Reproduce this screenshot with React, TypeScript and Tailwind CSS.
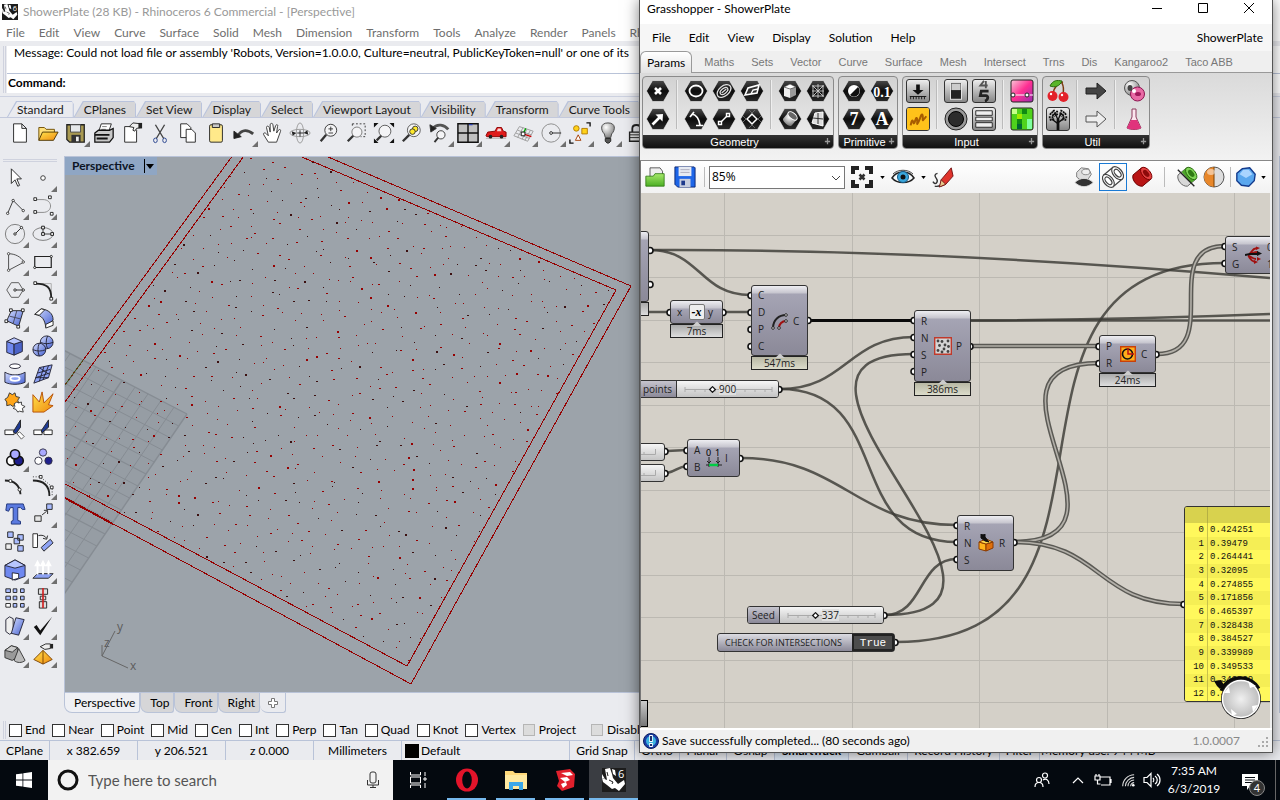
import { useState } from "react";
import type { ReactNode } from "react";

const ICONS: Record<string, ReactNode> = {
  // standard toolbar
  newFile: <path d="M5 2h9l5 5v15H5zM14 2v5h5" fill="#fff" stroke="#222" />,
  open: (
    <>
      <path d="M2 20V6h6l2 2h9v4" fill="#ffe07a" stroke="#6b4a00" />
      <path d="M2 20l4-9h17l-5 9z" fill="url(#gold)" stroke="#4a3300" />
    </>
  ),
  save: (
    <>
      <path d="M2 3h19v19H5l-3-3z" fill="#a99a52" stroke="#222" strokeWidth="1.4" />
      <path d="M6 3h11v8H6z" fill="#e6e8ea" stroke="#444" />
      <path d="M7 14h10v8H7z" fill="#333" />
      <path d="M12 16h3v5h-3z" fill="#eee" />
    </>
  ),
  print: (
    <>
      <path d="M6 11l3-9h11l-3 9z" fill="#fff" stroke="#222" />
      <path d="M10 5h5M9 8h5" stroke="#777" />
      <path d="M2 12l4-3h12l4-2v10l-4 5H2z" fill="#c8c8c8" stroke="#111" strokeWidth="1.4" />
      <path d="M2 14h16M4 18h12" stroke="#111" strokeWidth="2" />
    </>
  ),
  props: (
    <>
      <path d="M4 5h9l4 4v13H4z" fill="#fff" stroke="#222" />
      <path d="M9 5l4-4 9 1v4l-5 1-2 3-2-1 1-3z" fill="#eee" stroke="#222" />
      <path d="M19 1h4v6h-4z" fill="#222" />
    </>
  ),
  cut: (
    <g fill="none" stroke="#444">
      <path d="M7 3l9 15M17 3L8 18" strokeWidth="1.5" />
      <ellipse cx="7" cy="20" rx="2" ry="2.5" stroke="#24408c" />
      <ellipse cx="17" cy="20" rx="2" ry="2.5" stroke="#24408c" />
    </g>
  ),
  copy: (
    <g fill="#fff" stroke="#222">
      <path d="M4 2h7l4 4v11H4z" />
      <path d="M10 8h6l4 4v10H10z" />
    </g>
  ),
  paste: (
    <>
      <rect x="5" y="3" width="14" height="19" rx="1.5" fill="#ffe98a" stroke="#222" />
      <path d="M8 2h8v4H8z" fill="#c9c9c9" stroke="#222" />
    </>
  ),
  undo: (
    <>
      <path d="M6 14C10 8 16 8 22 13" fill="none" stroke="#444" strokeWidth="3" />
      <path d="M1 10l8 6-8 2z" fill="#222" stroke="#222" />
    </>
  ),
  hand: <path d="M8 22l-5-8c-1-2 1-3 3-1l2 2-2-9c0-2 2-2 3 0l1 5V3c0-2 3-2 3 0l1 7 2-6c1-2 3-1 2 1l-1 7 2-3c2-2 3 0 2 2l-4 11z" fill="#fff" stroke="#333" />,
  orbit: (
    <g fill="none" stroke="#999">
      <ellipse cx="12" cy="12" rx="11" ry="4" />
      <ellipse cx="12" cy="12" rx="4" ry="11" />
      <path d="M12 9v7M9 12h7" stroke="#222" />
      <path d="M3 10l5 2-4 3zM20 9l-4 3 5 2z" stroke="none" fill="#222" />
    </g>
  ),
  zoomInOut: (
    <g fill="none" stroke="#333">
      <circle cx="15" cy="9" r="6.5" fill="#f4f4f6" />
      <path d="M10 14l-6 7" strokeWidth="2.5" />
      <path d="M15 5v5M12.500 7.500h5M12.500 12h5" />
    </g>
  ),
  zoomWin: (
    <g fill="none" stroke="#333">
      <path d="M8 2h14v14h-5M8 2v4" strokeDasharray="2 2" />
      <circle cx="13" cy="11" r="5.500" stroke="#777" fill="#f4f4f6" />
      <path d="M9 15l-6 6" strokeWidth="2.500" />
    </g>
  ),
  zoomExt: (
    <g fill="none" stroke="#333">
      <circle cx="13" cy="10" r="6.500" fill="#f4f4f6" stroke="#555" />
      <path d="M9 15l-5 5" strokeWidth="2.500" />
      <path d="M1 6V1h5zM23 6V1h-5zM23 18v5h-5zM1 18v5h5z" fill="#111" stroke="none" />
    </g>
  ),
  zoomSel: (
    <g stroke="#333">
      <circle cx="14" cy="9" r="7" fill="#f4f4f6" stroke="#555" />
      <circle cx="15.500" cy="7.500" r="3" fill="#ffe92b" />
      <circle cx="12.500" cy="10.500" r="3" fill="#ffe92b" />
      <path d="M9 14l-7 7" strokeWidth="2.500" />
    </g>
  ),
  undoView: (
    <g fill="none" stroke="#333">
      <path d="M4 7c5-6 13-4 17 1" strokeWidth="3" stroke="#555" />
      <path d="M1 3l1 8 6-4z" fill="#222" />
      <circle cx="13" cy="14" r="4.500" fill="#f4f4f6" />
      <path d="M10 17l-4 5" strokeWidth="2" />
    </g>
  ),
  fourView: (
    <>
      <path d="M1 2h22v20H1z" fill="#c0c0c0" stroke="#111" strokeWidth="1.600" />
      <path d="M12 2v20M1 12h22" stroke="#111" strokeWidth="1.600" />
      <path d="M13 3h4" stroke="#1530d0" />
    </>
  ),
  car: (
    <>
      <path d="M1 18h22" stroke="#bbb" />
      <path d="M1 15l2-4 8-1 2-4h5l2 4 3 1v5H2z" fill="#e01b1b" stroke="#8c0000" />
      <path d="M14 7h3l1 3h-5z" fill="#f7d5d5" />
      <circle cx="6" cy="16" r="2" fill="#222" />
      <circle cx="18" cy="16" r="2" fill="#222" />
    </>
  ),
  cplane: (
    <g fill="none" stroke="#9a9a9a">
      <path d="M7 5l15 5-6 11L1 15zM5 9l15 5M3 12l15 6M11 6L5 17M15 8l-5 11M19 9l-6 11" />
      <path d="M11 13l9 3" stroke="#c00" strokeWidth="1.500" />
      <path d="M11 13l3-6" stroke="#0a0" strokeWidth="1.500" />
      <path d="M9 11h4v4H9z" fill="#fff" stroke="#111" />
    </g>
  ),
  circleTool: (
    <g fill="none" stroke="#888">
      <circle cx="11" cy="12" r="10" />
      <path d="M11 12h11" stroke="#222" />
      <circle cx="11" cy="12" r="1.500" fill="#fff" stroke="#222" />
    </g>
  ),
  objSnap: (
    <>
      <path d="M1 19v4h4M19 1h4v4" fill="none" stroke="#111" strokeWidth="1.500" />
      <circle cx="8" cy="7" r="3" fill="#ffd21a" stroke="#b07a00" />
      <path d="M14 7h6v6h-6z" fill="#ffd21a" stroke="#b07a00" />
      <path d="M10 14l3 6H7z" fill="#fff" stroke="#a33a00" />
    </>
  ),
  bulb: (
    <>
      <path d="M12 1c-9 0-8 8-4 12l1 4h6l1-4c4-4 5-12-4-12z" fill="url(#ball)" stroke="#444" />
      <path d="M9 18h6v3l-2 2h-2l-2-2z" fill="#555" stroke="#222" />
    </>
  ),
  lock: (
    <>
      <path d="M8 11V7c0-5 9-5 9 0v4" fill="none" stroke="#222" strokeWidth="2" />
      <path d="M5 11h15v10H5z" fill="#ddd" stroke="#222" strokeWidth="1.500" />
      <path d="M5 14h15M5 17h15" stroke="#222" />
    </>
  ),
  // side toolbar
  pointer: <path d="M8 2v16l4-4 3 7 2-1-3-7h5z" fill="#fff" stroke="#222" />,
  dot: <circle cx="12" cy="12" r="2.500" fill="#fff" stroke="#333" />,
  polyline: (
    <g fill="#fff" stroke="#333">
      <path d="M4 20L10 6l11 11" fill="none" />
      <circle cx="4" cy="20" r="1.300" />
      <circle cx="10" cy="6" r="1.300" />
      <circle cx="21" cy="17" r="1.300" />
    </g>
  ),
  curve: (
    <g fill="#fff" stroke="#222">
      <path d="M4 5h8c11 0 11 14 0 14H4" fill="none" stroke="#888" />
      <path d="M2 3h3v3H2zM18 1h3v3h-3zM2 17h3v3H2zM20 19h3v3h-3z" />
    </g>
  ),
  circle: (
    <g fill="none" stroke="#777">
      <circle cx="12" cy="12" r="10.500" />
      <path d="M12 12l7-7" stroke="#222" />
      <circle cx="12" cy="12" r="1.300" stroke="#222" fill="#fff" />
      <circle cx="19" cy="5" r="1.300" stroke="#222" fill="#fff" />
    </g>
  ),
  ellipse: (
    <g fill="none" stroke="#777">
      <ellipse cx="12" cy="12" rx="11" ry="7" />
      <path d="M12 5v7h10" stroke="#333" />
      <path d="M10.500 3.500h3v3h-3zM10.500 10.500h3v3h-3zM20.500 10.500h3v3h-3z" stroke="#111" fill="#fff" />
    </g>
  ),
  arc: (
    <g fill="#fff" stroke="#444">
      <path d="M5 3v18l17-9C18 6 12 3 5 3z" fill="none" />
      <circle cx="5" cy="3" r="1.300" />
      <circle cx="5" cy="21" r="1.300" />
      <circle cx="21" cy="12" r="1.300" />
    </g>
  ),
  rect: (
    <g fill="#fff" stroke="#222">
      <path d="M3 6h18v12H3z" fill="none" strokeWidth="1.300" />
      <circle cx="21" cy="6" r="1.200" />
      <circle cx="3" cy="18" r="1.200" />
    </g>
  ),
  polygon: (
    <g fill="none" stroke="#555">
      <path d="M3 12l5-8h8l5 8-5 8H8z" />
      <path d="M12 12h9" stroke="#222" />
      <circle cx="12" cy="12" r="1.300" stroke="#222" fill="#fff" />
      <circle cx="21" cy="12" r="1.300" stroke="#222" fill="#fff" />
    </g>
  ),
  fillet: (
    <g fill="none" stroke="#222">
      <path d="M4 5h17v16" stroke="#aaa" />
      <path d="M4 5c12 0 17 4 17 16" strokeWidth="2" />
      <path d="M2 3h3v3H2zM19.500 20h3v3h-3z" fill="#fff" />
    </g>
  ),
  surface: (
    <g stroke="#222">
      <path d="M8 4h13l-5 17-13-6z" fill="url(#blue)" />
      <path d="M14 4l-4 14M6 10l12 3" stroke="#445" fill="none" />
      <path d="M6 2h3v3H6zM19 2h3v3h-3zM1 14h3v3H1zM14 20h3v3h-3z" fill="#fff" />
    </g>
  ),
  sweep: (
    <g stroke="#222">
      <path d="M3 8l7-6c8 1 13 5 13 12l-8 8c-1-8-4-13-12-14z" fill="url(#blue)" />
      <path d="M3 8l7-6 4 1-6 6zM23 15v5l-8 3v-4z" fill="#fff" />
    </g>
  ),
  box: (
    <g stroke="#223">
      <path d="M3 7l8 3v12l-8-3z" fill="#6f88f0" />
      <path d="M11 10l9-3v11l-9 4z" fill="#4c64c9" />
      <path d="M3 7l8-4 9 4-9 3z" fill="#b7c5ff" />
    </g>
  ),
  spheres: (
    <g stroke="#223">
      <circle cx="16" cy="8" r="7" fill="url(#blue)" />
      <circle cx="8" cy="16" r="7" fill="url(#blue)" />
      <path d="M17 1c-2 4-2 10 0 14M9 8c5 2 9 2 14 0M8 9c-2 4-2 10 0 14M1 16c5 2 9 2 14 0" fill="none" />
    </g>
  ),
  revolve: (
    <g stroke="#223">
      <ellipse cx="12" cy="3.500" rx="6" ry="2.500" fill="#fff" />
      <path d="M1 10c6 4 16 4 22 0v11c-6 3-16 3-22 0z" fill="url(#blue)" />
      <ellipse cx="12" cy="17" rx="5" ry="2.500" fill="#8ea3f5" stroke="#fff" strokeWidth="2" />
    </g>
  ),
  mesh: (
    <g stroke="#223" fill="none">
      <path d="M8 5l14-3-4 14-16 6z" fill="#8ea3f5" />
      <path d="M13 4L8 20M18 3l-6 15M6 11l14-4M4 16l15-5M8 5l10 7M4 16l14 0" />
    </g>
  ),
  gears: (
    <>
      <path d="M6 2l3 2 3-2 1 4 4 1-2 3 1 3-4 1-2 3-3-2-4 1V12L1 9l3-2z" fill="#ffa61a" stroke="#333" />
      <path d="M14 12l2 1 3-1v3l4 2-3 2 1 4-4-1-2 1-2-3-3-1 2-2-1-3z" fill="#fff" stroke="#333" />
    </>
  ),
  burst: <path d="M1 23L1 4l7 8 3-11 2 12 10-10-5 12 5 1-10 7z" fill="url(#gold)" stroke="#b54b00" />,
  trim: (
    <g stroke="#222">
      <path d="M1 12h10v5H1z" fill="#fff" />
      <path d="M10 14l8-13v8l-5 7z" fill="#1f3a93" />
      <path d="M14 16l3-2 5 5-3 3z" fill="#fff" stroke="#555" />
    </g>
  ),
  split: (
    <g stroke="#222">
      <path d="M2 12h9v5H2zM13 12h9v5h-9z" fill="#fff" />
      <path d="M11 15l-1-2 8-12v8z" fill="#1f3a93" />
    </g>
  ),
  group: (
    <g stroke="#111" strokeWidth="1.800">
      <circle cx="8" cy="15" r="5" fill="#fff" />
      <circle cx="16" cy="15" r="5" fill="#1f1f8c" />
      <circle cx="12" cy="8" r="5" fill="#a9a9ff" />
    </g>
  ),
  ungroup: (
    <g stroke="#334">
      <circle cx="12" cy="6" r="4" fill="#a9a9ff" />
      <circle cx="7" cy="15" r="4" fill="#fff" />
      <circle cx="18" cy="15" r="4" fill="#1f1f8c" />
    </g>
  ),
  join: (
    <g fill="#fff" stroke="#222">
      <path d="M1 6c10 0 16 4 17 15" fill="none" strokeWidth="2" />
      <circle cx="7" cy="6.500" r="1.700" />
      <circle cx="17" cy="16" r="1.700" />
    </g>
  ),
  points: (
    <g fill="#fff" stroke="#222">
      <path d="M1 6c12 0 18 6 18 17" fill="none" strokeWidth="2" />
      <path d="M1 2h8l13 11v9" fill="none" strokeDasharray="1 2" />
      <path d="M8 .500h3v3H8zM20 12h3v3h-3z" />
    </g>
  ),
  text: <path d="M3 1h18l2 6h-3l-2-2h-3v14l3 1v3H8v-3l2-1V5H7L5 9 2 8z" fill="#5b7ae0" stroke="#1d3278" />,
  move: (
    <g stroke="#222">
      <path d="M16 1h6v6h-6z" fill="#a9bcff" />
      <path d="M3 14h7v6H3z" fill="#e5e5e5" />
      <path d="M11 13l5-4M13 8h4v4" fill="none" />
    </g>
  ),
  copies: (
    <g stroke="#222">
      <path d="M4 1h6v6H4zM15 4h6v6h-6zM11 8h6v6h-6zM15 16h6v6h-6z" fill="#a9bcff" />
      <path d="M2 14h6v6H2z" fill="#eee" />
    </g>
  ),
  rotate: (
    <g stroke="#222">
      <path d="M1 3h5v15H1z" fill="#fff" />
      <path d="M10 18l10-9 3 4-10 9z" fill="#8ea3f5" />
      <path d="M7 5c4-1 7 0 9 3M12 8l4 1 1-4" fill="none" />
    </g>
  ),
  solid: (
    <g stroke="#223">
      <path d="M1 7l11-6 11 6v12l-11 4-11-4z" fill="#6f88f0" />
      <path d="M1 7l11 3 11-3-11-6z" fill="#b7c5ff" />
      <path d="M9 15l7 1v5l-7 2z" fill="#fff" />
    </g>
  ),
  extrude: (
    <g stroke="#222">
      <path d="M1 21l5-5h17l-5 5z" fill="#8ea3f5" />
      <path d="M6 17V6M12 17V6M18 17V6M4 7l2-4 2 4zM10 7l2-4 2 4zM16 7l2-4 2 4z" stroke="#fff" strokeWidth="2" fill="#fff" />
    </g>
  ),
  array: (
    <g fill="#a9bcff" stroke="#222">
      <path d="M2 2h5v4H2zM10 2h4v4h-4zM18 2h4v4h-4zM2 10h5v4H2zM10 10h4v4h-4zM18 10h4v4h-4zM10 18h4v4h-4zM18 18h4v4h-4z" />
      <path d="M2 18h5v4H2z" fill="#fff" />
    </g>
  ),
  align: (
    <g fill="#ddd" stroke="#222">
      <path d="M7 2h10v6H7zM9 10h6v4H9zM8 16h8v7H8z" />
      <path d="M12 1v22" stroke="#d02020" strokeWidth="1.800" />
    </g>
  ),
  flow: (
    <g stroke="#223">
      <path d="M2 5l4-3 4 2v15l-4 2-4-3z" fill="#eee" />
      <path d="M8 20L13 3l9 2-6 17z" fill="url(#blue)" />
    </g>
  ),
  check: <path d="M2 13l3-2 4 6L22 2 9 22z" fill="#111" />,
  solids: (
    <g stroke="#333">
      <path d="M1 8l7-5 7 2v10l-6 4-8-3z" fill="#9a9a9a" />
      <path d="M1 8l8 2 6-5-7-2z" fill="#ccc" />
      <path d="M16 6l7 13c-3 3-9 3-12 0z" fill="#bbb" />
    </g>
  ),
  pyramid: (
    <>
      <path d="M12 8l10 10-10 5-10-5z" fill="url(#gold)" stroke="#7a3f00" />
      <path d="M12 8v15" stroke="#7a3f00" />
      <path d="M9 4l6-3h5v5l-6 1z" fill="#eee" stroke="#222" />
      <path d="M20 1h3v5h-3z" fill="#222" />
    </>
  ),
  // component symbols drawn on the hexagons
  hexX: <path d="M9 9l6 6M15 9l-6 6" stroke="#fff" strokeWidth="2.600" />,
  hexArrow: (
    <>
      <path d="M6.500 17.500l7-7" stroke="#fff" strokeWidth="2.600" />
      <path d="M9.500 7.500L17 7l-.5 7.500z" fill="#fff" />
    </>
  ),
  hexCircle: <ellipse cx="12" cy="12" rx="6.500" ry="5.500" fill="none" stroke="#fff" strokeWidth="1.800" />,
  hexArc: <path d="M8 7c5 1 7 5 8 11M6 10l4-5M12 18.500h7" fill="none" stroke="#fff" strokeWidth="1.700" />,
  hexOrbit: (
    <g fill="none" stroke="#ddd" strokeWidth="1.300" transform="rotate(-40 12 12)">
      <ellipse cx="12" cy="12" rx="8" ry="5" />
      <ellipse cx="12" cy="12" rx="4.500" ry="2.500" />
      <path d="M9 12h6" />
    </g>
  ),
  hexLine: (
    <g stroke="#fff" fill="#111" strokeWidth="1.400">
      <path d="M8 16l8-8" />
      <path d="M6.500 14.500h3v3h-3zM14.500 6.500h3v3h-3z" />
    </g>
  ),
  hexPlane: (
    <>
      <path d="M5 16l3-7 11-3-2 8z" fill="#333" stroke="#fff" strokeWidth="1.600" />
      <path d="M11 15l2-4 5-1" fill="none" stroke="#fff" strokeWidth="1.400" />
    </>
  ),
  hexRect: (
    <g fill="none" stroke="#fff">
      <path d="M12 7l5 5-5 5-5-5z" strokeWidth="1.600" />
      <path d="M9 3l12 12M3 9l12 12M15 3L3 15M21 9L9 21" stroke="#777" strokeWidth=".8" />
    </g>
  ),
  hexBox: (
    <>
      <path d="M6 8l6 2v9l-6-2z" fill="#eee" />
      <path d="M12 10l6-2v8l-6 3z" fill="#999" />
      <path d="M6 8l6-3 6 3-6 2z" fill="#fff" stroke="#444" strokeWidth=".6" />
    </>
  ),
  hexCyl: (
    <g transform="rotate(40 12 12)">
      <path d="M6.500 8v8c0 3 11 3 11 0V8z" fill="url(#ball)" />
      <ellipse cx="12" cy="8" rx="5.500" ry="3" fill="#666" stroke="#fff" />
    </g>
  ),
  hexMesh: <path d="M6 7h12M6 12h12M6 17h12M7 6v12M12 5v14M17 6v12M7 7l10 10M17 7L7 17" stroke="#ccc" strokeWidth=".9" fill="none" />,
  hexSrf: (
    <>
      <path d="M9 6l8-1v14l-11-3z" fill="#ddd" stroke="#fff" />
      <path d="M12 6v11M7 11l10 1" stroke="#333" />
    </>
  ),
  hexBool: (
    <>
      <circle cx="12" cy="12" r="6" fill="#fff" />
      <path d="M16 8a5.500 5.500 0 01-8 8z" fill="#111" />
    </>
  ),
  // input / util tiles
  tileSlider: (
    <>
      <path d="M10 5h4v6h4l-6 5-6-5h4z" fill="#111" />
      <path d="M3 18h18M4 18v3M7 18v3M10 18v3M13 18v3M16 18v3M19 18v3" stroke="#111" />
    </>
  ),
  tileMd: (
    <>
      <rect x="0" y="0" width="24" height="24" rx="2" fill="#ffc21a" />
      <path d="M4 19c1-6 2-7 3-3s3-9 4-4-1 7 1 4 4-12 5-8-2 9 4 1" fill="none" stroke="#a85c00" strokeWidth="2.200" />
    </>
  ),
  tileToggle: (
    <>
      <rect x="6" y="3" width="12" height="18" fill="#222" stroke="#eee" />
      <rect x="7" y="4" width="10" height="7" fill="#ccc" />
    </>
  ),
  tileKnob: (
    <>
      <circle cx="12" cy="12" r="11" fill="#999" stroke="#222" />
      <circle cx="12" cy="12" r="7.500" fill="#2c2c2c" stroke="#000" />
    </>
  ),
  tileScroll: (
    <>
      <path d="M12 1l-4 5h8M14 1v8" fill="none" stroke="#555" strokeWidth="2" />
      <path d="M17 12H9l-1 5h6c3 0 3 5-1 6" fill="none" stroke="#222" strokeWidth="3" />
    </>
  ),
  tileList: <path d="M3 3h18v5H3zM3 10h18v4H3zM3 16h18v5H3z" fill="#eee" stroke="#222" />,
  tileGrad: (
    <>
      <rect x="1" y="1" width="22" height="22" rx="2" fill="url(#pink)" stroke="#222" />
      <path d="M1 16h22" stroke="#fff" />
      <circle cx="3" cy="16" r="2" fill="#fff" stroke="#222" />
      <circle cx="17" cy="16" r="2" fill="#fff" stroke="#222" />
    </>
  ),
  tileSwatch: (
    <>
      <rect x="1" y="1" width="22" height="22" rx="2" fill="#4fd21c" stroke="#222" />
      <path d="M2 2h5v5H2z" fill="#c7ff8a" />
      <path d="M12 2h5v5h-5zM7 12h5v5H7z" fill="#0f8a12" />
      <path d="M7 17h5v5H7z" fill="#063" />
      <path d="M17 12h5v5h-5zM17 17h5v5h-5z" fill="#7fffa0" />
      <path d="M7 7h5v5H7z" fill="#a0e800" />
    </>
  ),
  cherry: (
    <>
      <path d="M7 15C8 8 12 4 17 3M17 15c1-5 0-9-1-11" fill="none" stroke="#7a3a10" strokeWidth="1.500" />
      <path d="M4 7c3-6 7-6 12-5-2 5-7 7-12 5z" fill="#58b52a" stroke="#2a6b10" />
      <circle cx="6.500" cy="17" r="5" fill="#e3222a" />
      <circle cx="17.500" cy="18" r="5" fill="#e3222a" />
      <circle cx="5" cy="15" r="1.200" fill="#fff" />
      <circle cx="16" cy="16" r="1.200" fill="#fff" />
    </>
  ),
  tree: (
    <g fill="none" stroke="#111">
      <path d="M12 24V12" strokeWidth="3" />
      <path d="M12 17l-7-5M12 16l7-5M12 13L9 6M12 13l3-7" strokeWidth="1.500" />
      <path d="M2 10h6M3 6l6 3M7 2l3 6M16 2l-2 6M21 6l-6 3M22 10h-6M3 13l6-1M21 13l-6-1M11 3v6M5 4l5 4M19 4l-5 4" strokeWidth="2.200" strokeDasharray="2 1" />
    </g>
  ),
  arrowDark: <path d="M2 9h11V4l9 8-9 8v-5H2z" fill="#444" stroke="#222" />,
  arrowLight: <path d="M2 9h11V4l9 8-9 8v-5H2z" fill="#eee" stroke="#555" />,
  balls: (
    <>
      <circle cx="10" cy="9" r="7.500" fill="url(#ball)" stroke="#555" />
      <circle cx="15.500" cy="15" r="7" fill="#e86aa5" stroke="#8c1550" />
      <ellipse cx="8" cy="9" rx="2.500" ry="3" fill="#444" />
      <ellipse cx="16" cy="15" rx="3" ry="2" fill="#a01a5c" />
      <circle cx="12" cy="12" r="2" fill="#fff" />
    </>
  ),
  flask: (
    <>
      <path d="M10 2h4v8l5 11c-4 2-10 2-14 0l5-11z" fill="#fbe6ee" stroke="#8c3a5c" />
      <path d="M9 13h6l4 8c-4 2-10 2-14 0z" fill="#e0337c" />
    </>
  ),
  // grasshopper canvas bar
  ghOpen: (
    <>
      <path d="M6 1h12l3 4v9H6z" fill="#eee" stroke="#444" />
      <path d="M1 11h9l2-3h11v15H1z" fill="url(#green)" stroke="#2f7a14" />
    </>
  ),
  ghSave: (
    <>
      <path d="M1 1h21l1 1v21H4l-3-3z" fill="#1e66e8" stroke="#0a2470" />
      <path d="M5 1h14v10H5z" fill="#e6eaf2" />
      <path d="M7 4h10M7 7h10" stroke="#aab" />
      <path d="M6 14h12v9H6z" fill="#c8cede" />
      <path d="M8 16h4v5H8z" fill="#1e3a8c" />
    </>
  ),
  fit: (
    <>
      <path d="M1 9V1h8v4H5v4zM15 1h8v8h-4V5h-4zM23 15v8h-8v-4h4v-4zM9 23H1v-8h4v4h4z" fill="#222" />
      <path d="M9.500 9.500l5 5M14.500 9.500l-5 5" stroke="#333" strokeWidth="2.500" />
    </>
  ),
  eye: (
    <>
      <path d="M1 13C6 5 18 5 23 13c-5 6-17 6-22 0z" fill="#f6fafc" stroke="#222" strokeWidth="1.500" />
      <circle cx="12" cy="12" r="5.500" fill="#3aa7dc" stroke="#145a86" />
      <circle cx="12" cy="12" r="2.500" fill="#111" />
      <path d="M2 9c5-5 15-5 20 0" fill="none" stroke="#444" />
    </>
  ),
  pencil: (
    <>
      <path d="M1 17c3 5 6 0 4-3s-3-5 1-6M3 22c5 1 6-1 7-2" fill="none" stroke="#333" strokeWidth="1.500" />
      <path d="M10 15L21 2l2 9-8 9-5 2z" fill="#e0342c" stroke="#701010" />
      <path d="M10 15l5 5-7 3z" fill="#e8c88a" stroke="#701010" />
    </>
  ),
  prevOff: (
    <>
      <path d="M4 7l5-5 8 1 3 6-4 6-7 1-5-4z" fill="#ddd" stroke="#777" />
      <ellipse cx="14" cy="6.500" rx="4.500" ry="3" fill="#eee" stroke="#888" />
      <path d="M2 18c6-6 14-6 20 0-6 6-14 6-20 0z" fill="#333" stroke="#ddd" />
    </>
  ),
  prevWire: (
    <g fill="#fff" stroke="#444" strokeWidth="1.200" transform="rotate(-40 12 12)">
      <path d="M6 4.500h12v15H6z" />
      <ellipse cx="6" cy="12" rx="4.500" ry="7.500" />
      <ellipse cx="6" cy="12" rx="2.500" ry="4.500" />
      <ellipse cx="18" cy="12" rx="4.500" ry="7.500" />
      <ellipse cx="18" cy="12" rx="2.500" ry="4.500" />
    </g>
  ),
  prevShade: (
    <g transform="rotate(-40 12 12)">
      <path d="M6 4h12v16H6c-5-3-5-13 0-16z" fill="#b81414" stroke="#6b0000" />
      <ellipse cx="18" cy="12" rx="4.500" ry="8" fill="#e04040" stroke="#7a0000" />
      <ellipse cx="18" cy="12" rx="2.500" ry="4.500" fill="#8c0a0a" />
    </g>
  ),
  prevSel: (
    <>
      <g transform="rotate(-40 12 12)">
        <path d="M6 4h12v16H6c-5-3-5-13 0-16z" fill="#d8d8d8" stroke="#666" />
        <path d="M11 4h7v16h-7z" fill="#4da52a" />
        <ellipse cx="18" cy="12" rx="4.500" ry="8" fill="#7fd456" stroke="#2a6b10" />
        <ellipse cx="18" cy="12" rx="2.500" ry="4.500" fill="#2f7a14" />
      </g>
      <path d="M2 4l18 18" stroke="#222" strokeWidth="1.500" />
    </>
  ),
  halfBall: (
    <>
      <circle cx="12" cy="12" r="10" fill="#ddd" stroke="#555" />
      <path d="M12 2a10 10 0 000 20z" fill="#e8872a" />
      <path d="M12 2v20" stroke="#7a3f00" />
      <ellipse cx="9" cy="7" rx="4" ry="3" fill="#fff" opacity=".5" />
    </>
  ),
  gem: (
    <>
      <path d="M8 3l8-1 6 7-1 7-6 6-8-1-5-5V8z" fill="#5aa7ee" stroke="#123a8c" strokeWidth="1.500" />
      <path d="M9 4h6l4 5-7 4-7-4z" fill="#a9d4ff" />
    </>
  ),
};

const Ico = ({ name, className = "size-6" }: { name: string; className?: string }) => (
  <svg viewBox="0 0 24 24" className={className} aria-hidden="true">
    {ICONS[name]}
  </svg>
);

const Defs = () => (
  <svg className="absolute size-0" aria-hidden="true">
    <defs>
      <linearGradient id="gold" x1="0" y1="0" x2="1" y2="1">
        <stop offset="0" stopColor="#ffe34d" />
        <stop offset="1" stopColor="#f08a10" />
      </linearGradient>
      <linearGradient id="blue" x1="0" y1="0" x2="1" y2="1">
        <stop offset="0" stopColor="#d5deff" />
        <stop offset="1" stopColor="#4560d0" />
      </linearGradient>
      <linearGradient id="green" x1="0" y1="0" x2="0" y2="1">
        <stop offset="0" stopColor="#a6e86a" />
        <stop offset="1" stopColor="#4caf24" />
      </linearGradient>
      <linearGradient id="pink" x1="0" y1="0" x2="1" y2="1">
        <stop offset="0" stopColor="#f7c9d8" />
        <stop offset=".5" stopColor="#ff2f92" />
        <stop offset="1" stopColor="#9a2bb0" />
      </linearGradient>
      <linearGradient id="hex" x1="0" y1="0" x2="0" y2="1">
        <stop offset="0" stopColor="#4a4a4a" />
        <stop offset=".5" stopColor="#0c0c0c" />
        <stop offset="1" stopColor="#2a2a2a" />
      </linearGradient>
      <radialGradient id="ball" cx=".35" cy=".3" r=".8">
        <stop offset="0" stopColor="#fff" />
        <stop offset="1" stopColor="#777" />
      </radialGradient>
      <radialGradient id="knob">
        <stop offset="0" stopColor="#f0f0f0" />
        <stop offset="1" stopColor="#bdbdbd" />
      </radialGradient>
    </defs>
  </svg>
);

const RhinoHead = ({ className }: { className: string }) => (
  <svg viewBox="0 0 24 24" className={className} aria-hidden="true">
    <path d="M0 0h24v24H0z" fill="#1c1c1c" />
    <path d="M3 1l5-1 2 6 1 4 5 6 6-4 1 4-6 7-4-3-3 1-5-4-4-3-1-4 5 2z" fill="#fff" />
    <path d="M10 1l3 1 1 6-3-2zM0 6l3 5-3-1z" fill="#fff" />
    <path d="M7 12l4 2-1 2M5 4l1 4" fill="none" stroke="#1c1c1c" />
    <text x="16" y="10" fill="#fff" fontSize="11" fontFamily="Open Sans, sans-serif">
      6
    </text>
  </svg>
);

/* ---------- Rhino ---------- */

const rhinoMenus = ["File", "Edit", "View", "Curve", "Surface", "Solid", "Mesh", "Dimension", "Transform", "Tools", "Analyze", "Render", "Panels", "Rhino"];
const rhinoTabs = ["Standard", "CPlanes", "Set View", "Display", "Select", "Viewport Layout", "Visibility", "Transform", "Curve Tools"];

// names ending in "+" carry a flyout corner
const standardTools = [
  "newFile", "open", "save+", "print", "props", "cut", "copy", "paste", "undo+", "hand", "orbit", "zoomInOut", "zoomWin", "zoomExt",
  "zoomSel", "undoView+", "fourView+", "car+", "cplane+", "circleTool+", "objSnap+", "bulb+", "lock",
];
const sideTools = [
  "pointer", "dot+", "polyline+", "curve+", "circle+", "ellipse+", "arc+", "rect+", "polygon+", "fillet+", "surface+", "sweep+",
  "box+", "spheres+", "revolve+", "mesh+", "gears", "burst", "trim", "split", "group+", "ungroup", "join", "points+",
  "text", "move+", "copies", "rotate", "solid+", "extrude+", "array+", "align+", "flow+", "check+", "solids+", "pyramid+",
];

const ToolButton = ({ tool }: { tool: string }) => {
  const name = tool.replace("+", "");
  return (
    <button type="button" aria-label={name} className="relative flex size-7 shrink-0 items-center justify-center">
      <Ico name={name} className="size-[22px]" />
      {tool.endsWith("+") && (
        <svg viewBox="0 0 6 6" className="absolute right-0 bottom-0 size-[6px]" aria-hidden="true">
          <path d="M6 0v6H0z" fill="#6f6f6f" />
        </svg>
      )}
    </button>
  );
};

// 30 x 30 jittered samples mapped onto the plate's inner outline
const plate = [[257, 136], [616, 290], [407, 666], [22, 461]];
const makePoints = () => {
  let seed = 337;
  const rnd = () => {
    seed = (seed * 16807) % 2147483647;
    return seed / 2147483647;
  };
  const pts: { x: number; y: number; w: number; h: number; c: string }[] = [];
  for (let i = 0; i < 30; i++) {
    for (let j = 0; j < 30; j++) {
      const u = (i + 0.1 + rnd() * 0.8) / 30;
      const v = (j + 0.1 + rnd() * 0.8) / 30;
      const at = (k: number) =>
        (1 - u) * (1 - v) * plate[0][k] + u * (1 - v) * plate[1][k] + u * v * plate[2][k] + (1 - u) * v * plate[3][k];
      const big = rnd();
      pts.push({
        x: Math.round(at(0)),
        y: Math.round(at(1)),
        w: big > 0.6 ? 2 : 1,
        h: big > 0.92 ? 2 : 1,
        c: rnd() > 0.3 ? "#960000" : "#3c1010",
      });
    }
  }
  return pts;
};
const samples = makePoints();

const Viewport = () => (
  <div className="relative min-h-0 flex-1 overflow-hidden border border-[#b9c3d8] bg-[#9ca3aa]">
    <svg className="absolute inset-0 h-full w-full" aria-hidden="true">
      <g transform="translate(-65 -157)">
        <path d="M187 414L65 351V593z" fill="#969da4" />
        <g stroke="#868c93" fill="none">
          {Array.from({ length: 11 }, (_, i) => (
            <path key={i} d={`M${187 - 13 * i} ${414 - 6.7 * i}l-170 249`} strokeWidth={i % 5 ? 1 : 1.4} />
          ))}
          {Array.from({ length: 16 }, (_, i) => (
            <path key={i} d={`M${187 - 8.2 * i} ${414 + 12 * i}l-170 -88`} strokeWidth={i % 5 ? 1 : 1.4} />
          ))}
        </g>
        <g shapeRendering="crispEdges">
          {samples.map((p, i) => (
            <rect key={i} x={p.x} y={p.y} width={p.w} height={p.h} fill={p.c} />
          ))}
        </g>
        <g stroke="#960000" fill="none" shapeRendering="crispEdges">
          <path d="M65 385L248 134.500" />
          <path d="M65 402L257 138L616 290L407 666L65 484" />
          <path d="M300 145L631 286L411 684L65 498" />
          <path d="M65 498l48 26" strokeWidth="2" />
        </g>
        <path d="M65 385l18-25" stroke="#3c6b2a" />
        <g stroke="#666" fill="none">
          <path d="M102 645v11l26 12M102 656l13-25" />
        </g>
        <g fill="#5c5c5c" fontSize="12" fontFamily="Open Sans, sans-serif">
          <text x="117" y="631">y</text>
          <text x="104" y="647">z</text>
          <text x="130" y="670">x</text>
        </g>
      </g>
    </svg>
    <button type="button" className="relative flex h-[18px] items-center bg-[#8fa6c4] pl-[7px] text-[12px] leading-4 font-bold text-[#0c1424]">
      Perspective
      <span className="ml-[9px] h-[14px] w-px bg-black" />
      <svg viewBox="0 0 8 5" className="mr-[3px] ml-px h-[5px] w-2" aria-hidden="true">
        <path d="M0 0h8L4 5z" />
      </svg>
    </button>
  </div>
);

const osnaps = ["End", "Near", "Point", "Mid", "Cen", "Int", "Perp", "Tan", "Quad", "Knot", "Vertex"];
const statusCell = "flex h-full shrink-0 items-center justify-center border-r border-[#b9c3d8]";

const RhinoWindow = () => (
  <div className="flex h-full flex-col bg-[#eaebef] text-[12px] leading-4 whitespace-nowrap">
    <header className="flex h-6 shrink-0 items-center bg-white pl-[2px] text-[#999]">
      <RhinoHead className="mr-[5px] size-4" />
      ShowerPlate (28 KB) - Rhinoceros 6 Commercial - [Perspective]
    </header>
    <div className="h-[17px] shrink-0 bg-white">
      <nav className="flex h-full w-1/2 items-center gap-[14px] overflow-hidden pl-[6px] text-[#6e6e6e]">
        {rhinoMenus.map((m) => (
          <button key={m} type="button">{m}</button>
        ))}
      </nav>
    </div>
    <div className="flex h-[52px] shrink-0 pt-[5px]">
      <div className="mr-px ml-[3px] w-[3px] border-x border-[#cfd2de]" />
      <div className="flex-1 bg-white">
        <div className="h-7 border-b border-[#b9c3d8] pl-[7px] leading-[13px] text-black">
          Message: Could not load file or assembly 'Robots, Version=1.0.0.0, Culture=neutral, PublicKeyToken=null' or one of its
        </div>
        <label className="flex h-[18px] items-center pl-px font-bold text-black">
          Command:
          <input aria-label="Command" className="ml-1 flex-1 outline-none" />
        </label>
      </div>
    </div>
    <div className="mt-[3px] h-[5px] shrink-0 border-t border-[#ccd1e0]" />
    <div role="tablist" className="flex h-[17px] shrink-0 overflow-hidden border-b border-[#c3c9dc] pl-[7px] text-[#1a1a1a]">
      {rhinoTabs.map((t, i) => (
        <button
          key={t}
          type="button"
          role="tab"
          className="bg-[#b9c3dc] pt-px [clip-path:polygon(9px_0,calc(100%-2px)_0,100%_3px,100%_100%,0_100%)]"
        >
          <span
            className={`mr-px ml-px flex h-full items-center px-[9px] [clip-path:polygon(9px_0,100%_0,100%_100%,0_100%)] ${i === 0 ? "bg-[#eaebef]" : "bg-[#d6d6d8]"}`}
          >
            {t}
          </span>
        </button>
      ))}
    </div>
    <div className="flex h-[38px] shrink-0 items-start overflow-hidden pt-px pl-[6px]">
      {standardTools.map((t) => (
        <ToolButton key={t} tool={t} />
      ))}
    </div>

    <div className="flex min-h-0 flex-1">
      <aside className="w-16 shrink-0">
        <div className="mx-[3px] mt-[3px] mb-[2px] h-[3px] w-[54px] border-y border-[#cfd2de]" />
        <div className="ml-px grid w-14 grid-cols-2">
          {sideTools.map((t) => (
            <ToolButton key={t} tool={t} />
          ))}
        </div>
      </aside>
      <div className="flex min-w-0 flex-1 flex-col">
        <Viewport />
        <div role="tablist" className="flex h-5 shrink-0 text-black">
          {["Perspective", "Top", "Front", "Right"].map((t, i) => (
            <button
              key={t}
              type="button"
              role="tab"
              className={`rounded-b-[3px] rounded-bl-[8px] border-r border-b border-l border-[#b9c3d8] pr-1 pl-[9px] ${i === 0 ? "bg-[#eff0f4]" : "bg-[#d6d6d8]"}`}
            >
              {t}
            </button>
          ))}
          <button type="button" aria-label="New viewport" className="flex w-[26px] items-center justify-center rounded-b-[3px] rounded-bl-[8px] border-r border-b border-[#b9c3d8]">
            <svg viewBox="0 0 10 10" className="size-[10px]" aria-hidden="true">
              <path d="M3.500 .5h3v3h3v3h-3v3h-3v-3h-3v-3h3z" fill="#fff" stroke="#777" />
            </svg>
          </button>
        </div>
      </div>
      <div className="w-3 shrink-0 border-r border-[#b9c3d8]" />
    </div>

    <div className="mt-[7px] flex h-5 shrink-0 items-center gap-[7px] overflow-hidden pl-[3px] text-black">
      <div className="-mr-1 h-[18px] w-[3px] border-x border-[#cfd2de]" />
      {osnaps.map((o) => (
        <label key={o} className="flex items-center gap-[3px]">
          <input type="checkbox" className="size-[13px] appearance-none border border-[#333] bg-white" />
          {o}
        </label>
      ))}
      {["Project", "Disable"].map((o) => (
        <label key={o} className="mr-2 flex items-center gap-1">
          <input type="checkbox" disabled className="size-3 appearance-none border border-[#b5b5b5] bg-[#dcdcdc]" />
          {o}
        </label>
      ))}
    </div>
    <footer className="flex h-5 shrink-0 items-center border-t border-[#b9c3d8] text-black">
      <div className={`${statusCell} w-[50px]`}>CPlane</div>
      <div className={`${statusCell} w-[88px]`}>x 382.659</div>
      <div className={`${statusCell} w-[88px]`}>y 206.521</div>
      <div className={`${statusCell} w-[88px]`}>z 0.000</div>
      <div className={`${statusCell} w-[88px]`}>Millimeters</div>
      <div className="flex h-full w-[168px] shrink-0 items-center gap-[2px] border-r border-[#b9c3d8] pl-[3px]">
        <span className="size-[14px] bg-black" />
        Default
      </div>
      <div className={`${statusCell} w-[65px]`}>Grid Snap</div>
      <div className={`${statusCell} w-[45px]`}>Ortho</div>
      <div className={`${statusCell} w-[47px]`}>Planar</div>
      <div className={`${statusCell} w-[48px]`}>Osnap</div>
      <div className={`${statusCell} w-[74px] bg-[#dbe6f3] font-bold`}>SmartTrack</div>
      <div className={`${statusCell} w-[59px]`}>Gumball</div>
      <div className={`${statusCell} w-[92px]`}>Record History</div>
      <div className={`${statusCell} w-[40px]`}>Filter</div>
      <div className="flex h-full flex-1 items-center pl-px">Memory use: 944 MB</div>
    </footer>
  </div>
);

/* ---------- Grasshopper ---------- */

const ghTabs = ["Maths", "Sets", "Vector", "Curve", "Surface", "Mesh", "Intersect", "Trns", "Dis", "Kangaroo2", "Taco ABB"];

const Hex = ({ name, glyph }: { name: string; glyph?: string }) => (
  <svg viewBox="0 0 24 24" className="size-6" aria-hidden="true">
    <path d="M6.500 1.500h11l6 10.500-6 10.500h-11L.5 12z" fill="url(#hex)" stroke="#f4f4f4" strokeWidth=".6" />
    {glyph ? (
      <text x="12" y="18" textAnchor="middle" fill="#fff" fontWeight="700" fontSize={glyph.length > 1 ? 14 : 18} fontFamily="Liberation Serif, serif">
        {glyph}
      </text>
    ) : (
      ICONS[name]
    )}
  </svg>
);

const Tile = ({ name }: { name: string }) => (
  <span className="flex size-6 rounded-[3px] border border-[#333] bg-linear-to-b from-[#eee] to-[#888]">
    <Ico name={name} className="size-[22px]" />
  </span>
);

type Cell = { kind: "hex" | "tile" | "plain"; name: string; glyph?: string };
const hex = (name: string, glyph?: string): Cell => ({ kind: "hex", name, glyph });
const tile = (name: string): Cell => ({ kind: "tile", name });
const plain = (name: string): Cell => ({ kind: "plain", name });

// each section is a list of columns, each column holds the upper and lower component
const ribbon: { title: string; sections: Cell[][][] }[] = [
  {
    title: "Geometry",
    sections: [
      [[hex("hexX"), hex("hexArrow")]],
      [[hex("hexCircle"), hex("hexArc")], [hex("hexOrbit"), hex("hexLine")], [hex("hexPlane"), hex("hexRect")]],
      [[hex("hexBox"), hex("hexCyl")], [hex("hexMesh"), hex("hexSrf")]],
    ],
  },
  { title: "Primitive", sections: [[[hex("hexBool"), hex("integer", "7")], [hex("number", "0.1"), hex("text", "A")]]] },
  {
    title: "Input",
    sections: [[[tile("tileSlider"), tile("tileMd")]], [[tile("tileToggle"), plain("tileKnob")], [tile("tileScroll"), tile("tileList")]], [[plain("tileGrad"), plain("tileSwatch")]]],
  },
  { title: "Util", sections: [[[plain("cherry"), tile("tree")]], [[plain("arrowDark"), plain("arrowLight")]], [[plain("balls"), plain("flask")]]] },
];

const RibbonGroup = ({ title, sections }: { title: string; sections: Cell[][][] }) => (
  <section className="flex h-[73px] flex-col justify-between overflow-hidden rounded-[4px] border border-[#8a8a8a] bg-linear-to-b from-[#d2d2d2] to-[#f0f0f0]">
    <div className="flex px-px pt-px">
      {sections.map((cols, s) => (
        <div key={s} className="flex">
          {s > 0 && <div className="mx-1 my-[2px] w-[2px] border-l border-[#bbb] bg-[#eee]" />}
          {cols.map((cells, c) => (
            <div key={c} className="flex w-7 flex-col items-center gap-1 pt-px">
              {cells.map((cell) => (
                <button key={cell.name} type="button" aria-label={cell.name}>
                  {cell.kind === "hex" ? <Hex name={cell.name} glyph={cell.glyph} /> : cell.kind === "tile" ? <Tile name={cell.name} /> : <Ico name={cell.name} />}
                </button>
              ))}
            </div>
          ))}
        </div>
      ))}
    </div>
    <div className="flex h-[13px] items-center bg-linear-to-b from-[#333] to-[#111] pr-[2px] font-['Liberation_Sans',Arial,sans-serif] text-[11px] leading-3 text-white">
      <span className="flex-1 pl-[2px] text-center">{title}</span>
      <svg viewBox="0 0 8 8" className="size-[7px]" aria-hidden="true">
        <path d="M4 0v7M1 4h6" stroke="#999" strokeWidth="1.500" />
      </svg>
    </div>
  </section>
);

const Caret = () => (
  <svg viewBox="0 0 6 4" className="h-[3px] w-[5px] shrink-0" aria-hidden="true">
    <path d="M0 0h6L3 4z" />
  </svg>
);

type NodeProps = {
  className: string;
  inputs?: string[];
  outputs?: string[];
  time?: string;
  warn?: boolean;
  children?: ReactNode;
};

const body = "rounded-[3px] border border-[#333] bg-[linear-gradient(to_bottom,#eeeef2,#c6c5ce_7px,#a5a4b4_8px,#8b8998)]";

const GhNode = ({ className, inputs = [], outputs = [], time, warn, children }: NodeProps) => (
  <div className={`absolute flex flex-col text-[10px] leading-3 text-[#222] ${className}`}>
    <div className={`flex flex-1 items-center justify-between pr-1 pl-[6px] ${body}`}>
      <div className="flex w-2 flex-col gap-[5px]">
        {inputs.map((p, i) => (
          <span key={i}>{p}</span>
        ))}
      </div>
      {children}
      <div className="flex w-[10px] flex-col gap-[5px]">
        {outputs.map((p, i) => (
          <span key={i}>{p}</span>
        ))}
      </div>
    </div>
    {time !== undefined && (
      <div className={`relative h-[14px] border border-[#222] text-center ${warn ? "bg-linear-to-b from-[#b8b8a4] to-[#dcdccb]" : "bg-linear-to-b from-[#aaa] to-[#dedede]"}`}>
        <svg viewBox="0 0 10 5" className="absolute -top-1 left-1/2 h-[5px] w-[10px] -translate-x-1/2" aria-hidden="true">
          <path d="M0 5l5-4.500 5 4.500z" fill="#ccc" />
        </svg>
        {time}
      </div>
    )}
  </div>
);

const sliderTicks = "M1 3v5M11 5v3M21 5v3M31 5v3M41 5v3M51 5v3M61 5v3M71 5v3M81 5v3M88 3v5M1 5.500h87";

const SliderNode = ({ className, label, value, max }: { className: string; label: string; value: number; max: number }) => {
  const [v, setV] = useState(value);
  return (
    <label className={`absolute flex h-[18px] overflow-hidden rounded-[3px] border border-[#333] text-[10px] leading-4 text-[#222] ${className}`}>
      <span className="border-r border-[#333] bg-linear-to-b from-[#c6c5ce] to-[#8b8998] px-1">{label}</span>
      <span className="relative flex flex-1 items-center bg-linear-to-b from-[#f6f6f6] via-[#dcdcdc] to-[#c4c4c4] pl-8">
        <svg viewBox="0 0 90 10" className="absolute top-[3px] left-[7px] h-[10px] w-[90px]" aria-hidden="true">
          <path d={sliderTicks} stroke="#aaa" fill="none" />
        </svg>
        <svg viewBox="0 0 7 7" className="relative mr-[3px] size-[7px]" aria-hidden="true">
          <path d="M3.500 .7l2.800 2.800-2.800 2.800L.7 3.500z" fill="#fff" stroke="#111" strokeWidth="1.200" />
        </svg>
        <span className="relative bg-[#dfdfdf] leading-3">{v}</span>
        <input type="range" min={0} max={max} value={v} onChange={(e) => setV(Number(e.target.value))} className="absolute inset-0 w-full opacity-0" />
      </span>
    </label>
  );
};

const wires = [
  "M650 250C850 249 1050 259 1270 278",
  "M650 250C700 250 700 295 750 295",
  "M641 312H670",
  "M723 312H751",
  "M970 320.500H1270",
  "M970 320.500C1070 320 1170 318 1270 314",
  "M780 389C846 389 848 337 914 337",
  "M780 389C895 389 842 542 957 542",
  "M885 615C1075 615 724 354 914 354",
  "M885 615C924 615 918 559 957 559",
  "M741 458C843 458 855 525 957 525",
  "M896 642C1162 642 959 263 1225 263",
  "M667 451L687 450",
  "M667 473C677 471 677 467 687 466",
];
const doubleWires = [
  "M971 346H1099",
  "M1157 354C1225 354 1157 246 1225 246",
  "M1014 542C1154 542 959 363 1099 363",
  "M1014 542C1102 542 1096 604 1184 604",
];
const ports = [
  [650, 250], [650, 284], [670, 312], [723, 312], [751, 295], [751, 312], [751, 329], [751, 346], [808, 320], [914, 320], [914, 337],
  [914, 354], [914, 371], [970, 346], [779, 389], [665, 451], [665, 473], [687, 450], [687, 466], [740, 458], [1099, 346], [1099, 363],
  [1156, 354], [1225, 246], [1225, 263], [957, 525], [957, 542], [957, 559], [1014, 542], [884, 615], [895, 642], [1184, 604],
];

const panelRows = ["0.424251", "0.39479", "0.264441", "0.32095", "0.274855", "0.171856", "0.465397", "0.328438", "0.384527", "0.339989", "0.349533", "0.346829", "0.411275"];

const Canvas = () => (
  <main className="relative min-h-0 flex-1 overflow-hidden border-l border-[#777] bg-[#d4d0c8] font-['Open_Sans','Noto_Sans',sans-serif]">
    <svg className="absolute inset-0 h-full w-full" aria-hidden="true">
      <g transform="translate(-641 -193)">
        <g stroke="#bcb9b2">
          {[724.5, 852.5, 979.5, 1107.5, 1234.5].map((x) => (
            <path key={x} d={`M${x} 193v560`} />
          ))}
          {Array.from({ length: 12 }, (_, i) => Math.floor(235 + 42.5 * i) + 0.5).map((y) => (
            <path key={y} d={`M641 ${y}h640`} />
          ))}
        </g>
        <g fill="none" stroke="#3c3b36" strokeOpacity=".82" strokeWidth="2.500">
          {wires.map((d) => (
            <path key={d} d={d} />
          ))}
        </g>
        {doubleWires.map((d) => (
          <g key={d} fill="none">
            <path d={d} stroke="#5a5954" strokeWidth="4.600" />
            <path d={d} stroke="#b3b0a9" strokeWidth="1.600" />
          </g>
        ))}
        <path d="M808 320.500H914" stroke="#0a0a0a" strokeWidth="3" />
        {ports.map(([x, y]) => (
          <circle key={`${x}-${y}`} cx={x} cy={y + 0.5} r="3" fill="#fff" stroke="#111" strokeWidth="1.600" />
        ))}
      </g>
    </svg>

    <GhNode className="top-[38px] left-[-24px] h-[85px] w-8" time="" />
    <GhNode className="top-[107px] left-[29px] h-[38px] w-[53px]" inputs={["x"]} outputs={["y"]} time="7ms">
      <span className="rounded-[2px] border border-[#777] bg-[#eee] px-[2px] font-['Liberation_Serif',serif] text-[12px] leading-[14px] font-bold text-black italic">-x</span>
    </GhNode>
    <GhNode className="top-[92px] left-[110px] h-[85px] w-[57px]" inputs={["C", "D", "P", "C"]} outputs={["C"]} time="547ms" warn>
      <svg viewBox="0 0 18 18" className="size-[18px]" aria-hidden="true">
        <path d="M2 16C2 8 8 3 15 3" fill="none" stroke="#222" strokeWidth="2" />
        <path d="M8 16c0-4 3-7 7-7" fill="none" stroke="#a01010" strokeWidth="2" />
        <g fill="#fff" stroke="#222">
          <circle cx="2" cy="16" r="1.300" />
          <circle cx="15" cy="3" r="1.300" />
          <circle cx="8" cy="16" r="1.300" />
          <circle cx="15" cy="9" r="1.300" />
        </g>
      </svg>
    </GhNode>
    <GhNode className="top-[117px] left-[273px] h-[86px] w-[57px]" inputs={["R", "N", "S", "P"]} outputs={["P"]} time="386ms" warn>
      <svg viewBox="0 0 18 18" className="size-[18px]" aria-hidden="true">
        <path d="M.7 .7h16.600v16.600H.7z" fill="#d5d5d5" stroke="#c0392b" strokeWidth="1.400" />
        <g fill="#444">
          {[[4, 4], [8, 4.500], [14, 4], [5.500, 8.500], [11, 8], [14.500, 9.500], [4, 13.500], [10, 12], [8, 15], [14, 14.500]].map(([x, y]) => (
            <circle key={`${x}-${y}`} cx={x} cy={y} r="1.400" />
          ))}
        </g>
      </svg>
    </GhNode>
    <SliderNode className="top-[187px] left-[-65px] w-[203px] [&>span:first-child]:w-[100px] [&>span:first-child]:text-right" label="Number of points" value={900} max={2500} />
    <div className="absolute top-[250px] left-[-4px] h-[18px] w-7 rounded-[3px] border border-[#333] bg-linear-to-b from-[#f6f6f6] to-[#c4c4c4]">
      <svg viewBox="0 0 20 6" className="mt-[5px] h-[6px] w-5" aria-hidden="true"><path d="M0 5.500h17.500V0M6 3v2" fill="none" stroke="#aaa" /></svg>
    </div>
    <div className="absolute top-[271px] left-[-4px] h-[18px] w-7 rounded-[3px] border border-[#333] bg-linear-to-b from-[#f6f6f6] to-[#c4c4c4]">
      <svg viewBox="0 0 20 6" className="mt-[5px] h-[6px] w-5" aria-hidden="true"><path d="M0 5.500h17.500V0M6 3v2" fill="none" stroke="#aaa" /></svg>
    </div>
    <GhNode className="top-[246px] left-[46px] h-[38px] w-[53px]" inputs={["A", "B"]} outputs={["I"]}>
      <svg viewBox="0 0 18 20" className="h-5 w-[18px]" aria-hidden="true">
        <text x="1" y="8" fontSize="9" fontFamily="Noto Sans, sans-serif">0</text>
        <text x="10" y="8" fontSize="9" fontFamily="Noto Sans, sans-serif">1</text>
        <path d="M4 9v10M13 9v10M1 17h16M2 13l2 2 2-2M11 13l2 2 2-2" fill="none" stroke="#222" />
        <path d="M4 17h9" stroke="#0c4" strokeWidth="2.500" />
      </svg>
    </GhNode>
    <GhNode className="top-[142px] left-[458px] h-[52px] w-[57px]" inputs={["P", "R"]} outputs={["C"]} time="24ms">
      <svg viewBox="0 0 16 16" className="size-4" aria-hidden="true">
        <path d="M.7 .7h14.600v14.600H.7z" fill="#ffae1a" stroke="#c8400a" strokeWidth="1.400" />
        <circle cx="7.500" cy="8" r="5" fill="none" stroke="#111" strokeWidth="1.600" />
        <path d="M8 2v6h6" fill="none" stroke="#c01010" strokeWidth="1.500" />
      </svg>
    </GhNode>
    <GhNode className="top-[43px] left-[584px] h-[38px] w-[57px]" inputs={["S", "G"]} outputs={["0", "1"]}>
      <svg viewBox="0 0 18 18" className="size-[18px]" aria-hidden="true">
        <path d="M4 8c3-1 2-5 8-6M4 8c3 0 4-2 9-2M3 10c3 0 4 3 8 3M3 10c2 1 2 5 7 6" fill="none" stroke="#a01010" strokeWidth="1.800" />
        <path d="M11 .500l4 1.500-4 2zM12 11l4 2-4 2zM9 14l4 2-4 2z" fill="#a01010" />
        <path d="M0 9l5-1h8" fill="none" stroke="#111" strokeWidth="2" />
        <path d="M12 5l5 2.500-5 2.500z" fill="#111" />
      </svg>
    </GhNode>
    <GhNode className="top-[322px] left-[316px] h-[56px] w-[57px]" inputs={["R", "N", "S"]} outputs={["R"]}>
      <svg viewBox="0 0 18 18" className="size-[18px]" aria-hidden="true">
        <path d="M2 8l7 2v7l-7-2z" fill="#ffb31a" stroke="#8c3a00" />
        <path d="M9 10l7-2v6l-7 3z" fill="#e0700a" stroke="#8c3a00" />
        <path d="M2 8l7-3 7 3-7 2z" fill="#ffd94d" stroke="#8c3a00" />
        <path d="M4 0l2 1 2-1v3l4 5-4-1-4-3z" fill="#111" stroke="#111" />
      </svg>
    </GhNode>
    <SliderNode className="top-[413px] left-[106px] w-[137px]" label="Seed" value={337} max={1000} />
    <div className="absolute top-[440px] left-[76px] flex h-[19px] w-[178px] items-center justify-between rounded-[3px] border border-[#333] bg-linear-to-b from-[#dcdce2] to-[#8b8998] pl-[7px] text-[9px] text-[#222]">
      CHECK FOR INTERSECTIONS
      <button type="button" className="h-full w-[42px] border-2 border-[#222] bg-[#4c4c4c] font-['Liberation_Mono',monospace] text-[11px] leading-3 text-white">
        True
      </button>
    </div>

    <table className="absolute top-[313px] left-[543px] h-[196px] w-[130px] border-separate border-spacing-0 overflow-hidden rounded-[3px] border border-[#333] bg-[#fff65a] font-['Liberation_Mono',monospace] text-[9px] leading-3 text-[#111]">
      <thead>
        <tr className="h-4 bg-[#d8d24e]">
          <th aria-label="Index" className="w-[23px] border-r border-[#b5b044] p-0" />
          <th aria-label="Value" className="p-0" />
        </tr>
      </thead>
      <tbody>
        {panelRows.map((v, i) => (
          <tr key={i} className="odd:bg-[#fff85c] even:bg-[#f5ee55]">
            <td className="border-r border-[#c8c24a] p-0 pr-[3px] text-right">{i}</td>
            <td className="p-0 pl-[2px]">{v}</td>
          </tr>
        ))}
      </tbody>
    </table>

    <svg viewBox="0 0 56 48" className="absolute right-[2px] bottom-[7px] h-12 w-14" aria-hidden="true">
      <path d="M10 18C15 3 38 1 46 16" fill="none" stroke="#0a0a0a" strokeWidth="5" />
      <path d="M2 8l7-1 3 5-4 4-3-3z" fill="#0a0a0a" />
      <circle cx="29" cy="26" r="20" fill="#222" />
      <circle cx="29" cy="26" r="18.500" fill="url(#knob)" stroke="#fff" strokeWidth="1.500" />
      <path d="M36 8l8 5-6 2zM12 20l5-6 1 6zM20 43l-1-7 6 5zM46 32l-5 7-1-6z" fill="#fff" />
    </svg>
    <div className="absolute bottom-px left-[-4px] h-[27px] w-[11px] border border-black bg-linear-to-b from-[#ccc] to-[#777]" />
  </main>
);

const GrasshopperWindow = () => {
  const [zoom, setZoom] = useState("85%");
  return (
    <div className="absolute top-0 right-[7px] bottom-[7px] left-[calc(50%-1px)] flex flex-col border-r border-b border-l border-[#555] bg-[#efefef] text-[12px] leading-4 whitespace-nowrap shadow-[0_0_14px_rgba(0,0,0,0.5)]">
      <header className="flex h-6 shrink-0 items-start justify-between bg-white pl-[7px] text-black">
        <span className="pt-px">Grasshopper - ShowerPlate</span>
        <div className="flex gap-[34px] pt-[3px] pr-[17px]">
          <button type="button" aria-label="Minimize">
            <svg viewBox="0 0 12 12" className="size-3" aria-hidden="true"><path d="M1 5.500h10" stroke="#000" /></svg>
          </button>
          <button type="button" aria-label="Maximize">
            <svg viewBox="0 0 12 12" className="size-3" aria-hidden="true"><path d="M1.500 .5h9v9h-9z" fill="none" stroke="#000" /></svg>
          </button>
          <button type="button" aria-label="Close">
            <svg viewBox="0 0 12 12" className="size-3" aria-hidden="true"><path d="M1 0l10 10M11 0L1 10" stroke="#000" /></svg>
          </button>
        </div>
      </header>
      <nav className="flex h-[27px] shrink-0 items-center gap-[18px] bg-[#f6f6f6] pr-[9px] pl-3 text-black">
        {["File", "Edit", "View", "Display", "Solution", "Help"].map((m) => (
          <button key={m} type="button">{m}</button>
        ))}
        <button type="button" className="ml-auto">ShowerPlate</button>
      </nav>
      <div role="tablist" className="flex h-[22px] shrink-0 items-end border-b border-[#999]">
        <button type="button" role="tab" className="-mb-px h-[22px] rounded-t-[6px] border border-b-0 border-[#999] bg-linear-to-b from-white to-[#e2e2e2] px-[6px] text-black">
          Params
        </button>
        <div className="flex h-full flex-1 items-center gap-[17px] pl-3 font-['Liberation_Sans',Arial,sans-serif] text-[11px] text-[#777]">
          {ghTabs.map((t) => (
            <button key={t} type="button" role="tab">{t}</button>
          ))}
        </div>
      </div>
      <div className="flex h-[88px] shrink-0 items-start gap-1 border-b border-[#888] bg-linear-to-b from-[#dadada] to-[#f2f2f2] pt-[3px] pl-[2px]">
        {ribbon.map((g) => (
          <RibbonGroup key={g.title} title={g.title} sections={g.sections} />
        ))}
      </div>
      <div className="flex h-8 shrink-0 items-center border-l border-[#777] bg-linear-to-b from-white to-[#f2f2f2] pr-[6px] pl-1">
        <button type="button" aria-label="Open file"><Ico name="ghOpen" className="size-5" /></button>
        <button type="button" aria-label="Save file" className="ml-[9px]"><Ico name="ghSave" className="size-[22px]" /></button>
        <div className="mx-1 ml-2 h-5 w-px bg-[#bbb]" />
        <div className="relative w-[136px]">
          <select aria-label="Zoom" value={zoom} onChange={(e) => setZoom(e.target.value)} className="h-[23px] w-full appearance-none border border-[#777] bg-white pl-[2px] font-['Open_Sans',sans-serif] text-[12px] text-black">
            <option>50%</option>
            <option>85%</option>
            <option>100%</option>
          </select>
          <svg viewBox="0 0 10 6" className="pointer-events-none absolute top-[9px] right-1 h-[6px] w-[10px]" aria-hidden="true">
            <path d="M1 1l4 4 4-4" fill="none" stroke="#444" />
          </svg>
        </div>
        <div className="flex items-center gap-[6px] pl-[5px]">
          <button type="button" aria-label="Zoom extents"><Ico name="fit" /></button>
          <Caret />
          <button type="button" aria-label="Named views"><Ico name="eye" /></button>
          <Caret />
          <button type="button" aria-label="Sketch"><Ico name="pencil" className="size-[22px]" /></button>
        </div>
        <div className="ml-auto flex items-center gap-1">
          <button type="button" aria-label="No preview"><Ico name="prevOff" className="size-[22px]" /></button>
          <button type="button" aria-label="Wireframe preview" className="flex size-7 items-center justify-center border border-[#1a7ad4]"><Ico name="prevWire" className="size-6" /></button>
          <button type="button" aria-label="Shaded preview"><Ico name="prevShade" className="size-[22px]" /></button>
          <div className="mx-[7px] h-5 w-px bg-[#bbb]" />
          <button type="button" aria-label="Preview selected"><Ico name="prevSel" className="size-[22px]" /></button>
          <button type="button" aria-label="Document preview"><Ico name="halfBall" className="size-6" /></button>
          <div className="h-5 w-px bg-[#bbb]" />
          <button type="button" aria-label="Mesh quality"><Ico name="gem" className="size-[22px]" /></button>
          <Caret />
        </div>
      </div>
      <div className="flex min-h-0 flex-1 pr-[2px]">
        <Canvas />
      </div>
      <footer className="flex h-6 shrink-0 items-center border-t-2 border-white bg-[#f0f0f0] pr-[3px] pl-[3px] text-black">
        <svg viewBox="0 0 16 16" className="mr-[3px] size-4" aria-hidden="true">
          <circle cx="8" cy="8" r="7.500" fill="#1a3fa8" stroke="#0a1c5c" />
          <circle cx="8" cy="8" r="5" fill="#3cb4e0" />
          <path d="M8 2v7M8 10v4" stroke="#fff" strokeWidth="3.500" />
          <path d="M8 3v5M8 11v2" stroke="#0a1c5c" strokeWidth="1.800" />
        </svg>
        Save successfully completed... (80 seconds ago)
        <span className="ml-auto text-[#888]">1.0.0007</span>
        <svg viewBox="0 0 12 12" className="mt-1 ml-[17px] size-3" aria-hidden="true">
          <path d="M9 1h2M9 5h2M9 9h2M5 5h2M5 9h2M1 9h2" stroke="#aaa" strokeWidth="2" />
        </svg>
      </footer>
    </div>
  );
};

/* ---------- Taskbar ---------- */

const TaskApp = ({ label, running, wide, children }: { label: string; running?: boolean; wide?: boolean; children: ReactNode }) => (
  <button type="button" aria-label={label} className={`flex h-full w-[49px] items-center justify-center ${wide ? "bg-[#3a3d42]" : "px-[5px]"}`}>
    <span className={`flex h-full w-full items-center justify-center ${running ? "border-b-2 border-[#76b9ed] pt-[2px]" : ""}`}>{children}</span>
  </button>
);

const Taskbar = () => (
  <div className="flex h-10 shrink-0 items-center bg-[#04090f] text-white">
    <button type="button" aria-label="Start" className="flex h-full w-12 items-center justify-center">
      <svg viewBox="0 0 16 16" className="size-4" aria-hidden="true">
        <path d="M0 2.300L6.500 1.400V7.600H0zM7.300 1.300L16 0v7.600H7.300zM0 8.400h6.500v6.200L0 13.700zM7.300 8.400H16V16l-8.700-1.300z" fill="#fff" />
      </svg>
    </button>
    <label className="flex h-full w-[345px] items-center bg-[#f2f2f2] pr-3 pl-2">
      <svg viewBox="0 0 24 24" className="size-6" aria-hidden="true">
        <circle cx="12" cy="12" r="9" fill="none" stroke="#111" strokeWidth="3" />
      </svg>
      <input aria-label="Search" placeholder="Type here to search" className="ml-2 flex-1 bg-transparent text-[15px] outline-none placeholder:text-[#555]" />
      <svg viewBox="0 0 16 18" className="h-[18px] w-4" aria-hidden="true">
        <g fill="none" stroke="#333">
          <rect x="5" y="1" width="6" height="11" rx="2" />
          <path d="M2.500 9v5h11V9M8 14v3M5 16.500h6" />
        </g>
      </svg>
    </label>
    <TaskApp label="Task view">
      <svg viewBox="0 0 18 16" className="h-4 w-[18px]" aria-hidden="true">
        <path d="M1.500 0v3h10V0M1.500 16v-3h10v3M1.500 5h10v6h-10zM16 0v4M16 11v5M15 6h2v2h-2z" fill="none" stroke="#fff" />
      </svg>
    </TaskApp>
    <TaskApp label="Opera" running>
      <svg viewBox="0 0 24 24" className="size-6" aria-hidden="true">
        <ellipse cx="12" cy="12" rx="11" ry="11.500" fill="#e3142a" />
        <ellipse cx="12" cy="12" rx="4.800" ry="8.500" fill="#04090f" />
      </svg>
    </TaskApp>
    <TaskApp label="File Explorer" running>
      <svg viewBox="0 0 24 22" className="h-[22px] w-6" aria-hidden="true">
        <path d="M1 2h8l2 2h12v16H1z" fill="#ffd97a" />
        <path d="M1 6h22v14H1z" fill="#ffe9a0" />
        <path d="M5 21v-8h14v8h-4v-4H9v4z" fill="#3aa7e8" />
      </svg>
    </TaskApp>
    <TaskApp label="SketchUp" running>
      <svg viewBox="0 0 24 24" className="size-6" aria-hidden="true">
        <path d="M3 3l14-2 5 5-1 13-12 4-5-5 2-5z" fill="#e0202c" />
        <path d="M8 5l9-1 3 3-6 1-2-1zM7 10l7-1 3 3-5 2zM8 16l5-2 1 3-4 3z" fill="#fff" />
      </svg>
    </TaskApp>
    <TaskApp label="Rhinoceros 6" running wide>
      <RhinoHead className="size-6" />
    </TaskApp>

    <div className="ml-auto flex items-center">
      <svg viewBox="0 0 16 16" className="mr-[22px] size-4" aria-hidden="true">
        <g fill="none" stroke="#fff" strokeWidth="1.200">
          <circle cx="5" cy="8" r="2.500" />
          <path d="M1 15c0-6 8-6 8 0" />
          <circle cx="11" cy="3.500" r="2.500" />
          <path d="M9 8c3-2 6 0 6 4" />
        </g>
      </svg>
      <svg viewBox="0 0 12 7" className="mr-[10px] h-[7px] w-3" aria-hidden="true">
        <path d="M1 6l5-5 5 5" fill="none" stroke="#fff" strokeWidth="1.200" />
      </svg>
      <svg viewBox="0 0 18 14" className="mr-[9px] h-[14px] w-[18px]" aria-hidden="true">
        <path d="M6 4h10v8H7M17 6v4M1 3h5v4H1zM2 1v2M5 1v2M3.500 7v4h3" fill="none" stroke="#fff" strokeWidth="1.200" />
      </svg>
      <svg viewBox="0 0 16 16" className="mr-2 size-[14px]" aria-hidden="true">
        <path d="M2 15C2 8 8 2 15 2M5 15c0-5 5-10 10-10M8 15c0-4 3-7 7-7M11 15c0-2 2-4 4-4" fill="none" stroke="#ddd" strokeWidth="1.200" />
        <circle cx="14" cy="14" r="1.500" fill="#fff" />
      </svg>
      <svg viewBox="0 0 18 16" className="mr-[10px] h-4 w-[18px]" aria-hidden="true">
        <path d="M1 5.500h3l4-4v13l-4-4H1zM10 6c1 1 1 3 0 4M12 4c3 2 3 6 0 8M14 2c4 3 4 9 0 12" fill="none" stroke="#fff" strokeWidth="1.200" />
      </svg>
      <div className="flex w-[46px] flex-col items-center text-[12px] leading-[18px] whitespace-nowrap">
        <span>7:35 AM</span>
        <span>6/3/2019</span>
      </div>
      <button type="button" aria-label="Notifications" className="relative mr-[6px] ml-6 h-6 w-7">
        <svg viewBox="0 0 16 16" className="mt-1 ml-px size-4" aria-hidden="true">
          <path d="M0 0h16v12H8l-3 4v-4H0z" fill="#fff" />
          <path d="M3 3.500h10M3 6h10M3 8.500h7" stroke="#04090f" />
        </svg>
        <span className="absolute right-1 -bottom-1 flex size-4 items-center justify-center rounded-full border border-[#888] bg-[#333] text-[11px] leading-3">4</span>
      </button>
      <div className="mr-1 h-10 w-px bg-[#666]" />
    </div>
  </div>
);

export default function App() {
  return (
    <div className="flex h-screen flex-col overflow-hidden font-['Lato','Open_Sans',sans-serif]">
      <Defs />
      <div className="relative min-h-0 flex-1 overflow-hidden">
        <RhinoWindow />
        <GrasshopperWindow />
      </div>
      <Taskbar />
    </div>
  );
}
